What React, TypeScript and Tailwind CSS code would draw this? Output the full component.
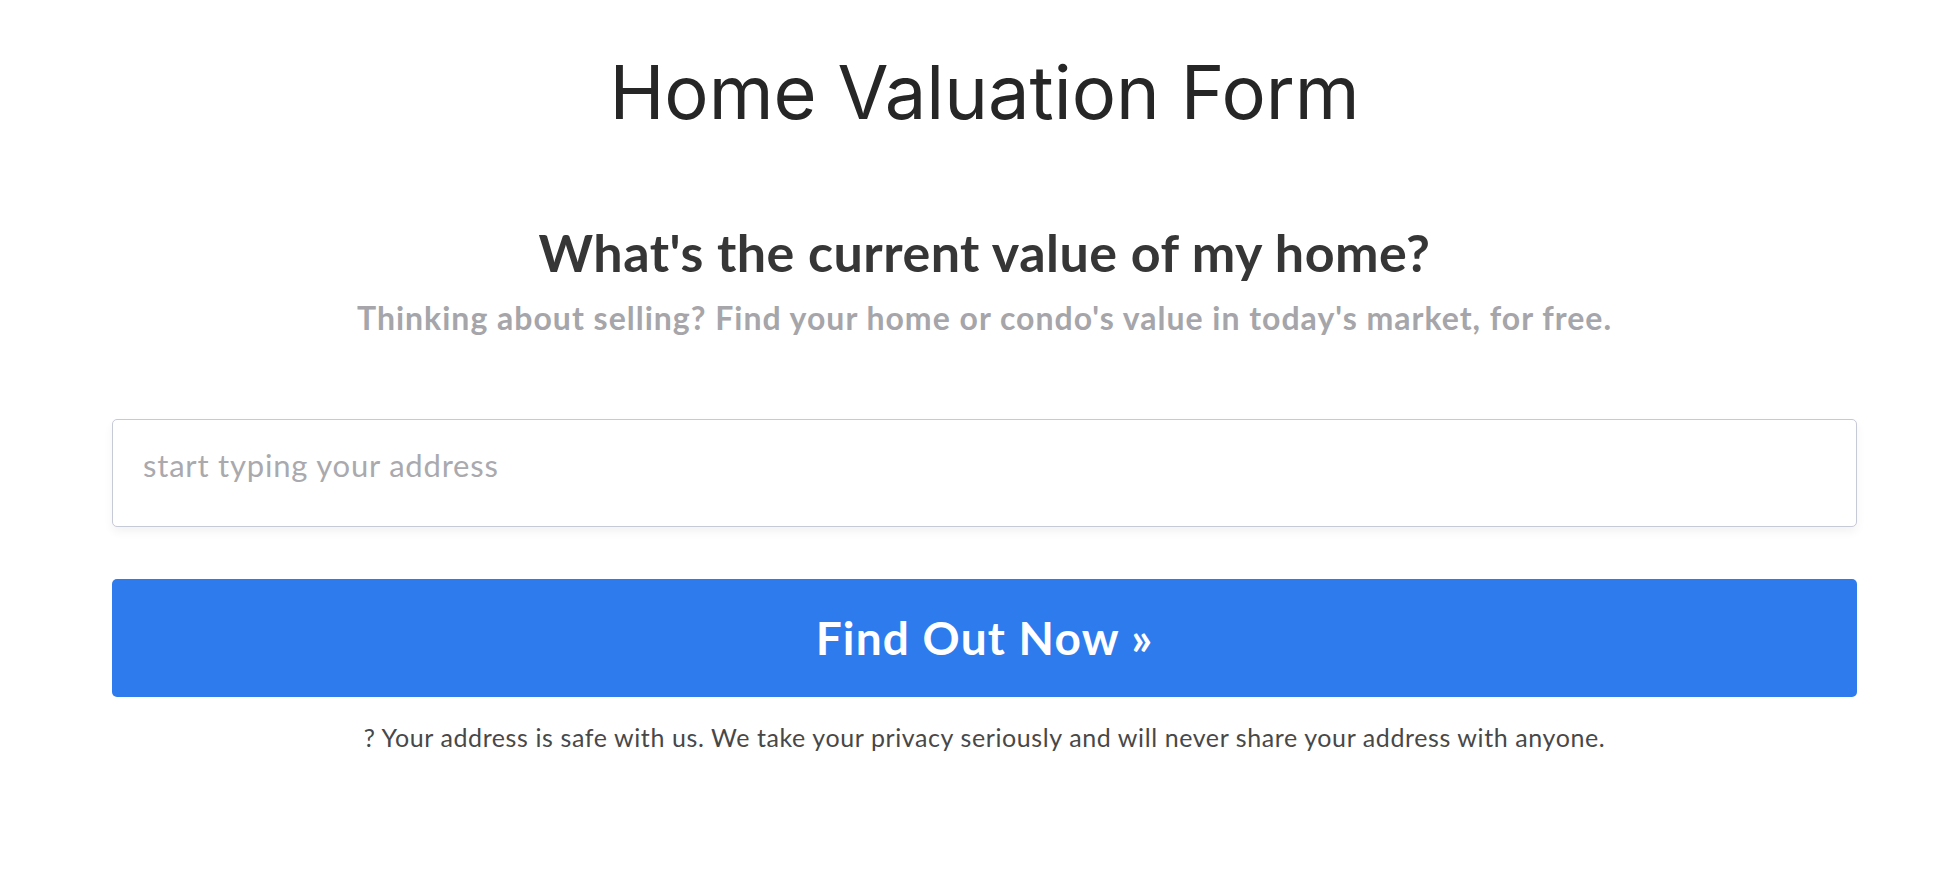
export default function App() {
  return (
    <main className="min-h-screen bg-white pl-[112px] pr-[81px] font-['Lato',sans-serif]">
      <h1 className="pt-[55px] text-center font-['Inter',sans-serif] text-[74px] font-normal leading-none text-[#262626]">
        Home Valuation Form
      </h1>

      <section className="mt-[97px] text-center">
        <h2 className="text-[52px] font-bold leading-none tracking-[0.5px] text-[#363636]">
          What's the current value of my home?
        </h2>
        <p className="mt-[24px] text-[32px] font-bold leading-none tracking-[1px] text-[#a5a5aa]">
          Thinking about selling? Find your home or condo's value in today's market, for free.
        </p>
      </section>

      <form className="mt-[85px]" onSubmit={(e) => e.preventDefault()}>
        <input
          type="text"
          placeholder="start typing your address"
          className="block h-[108px] w-full rounded-[5px] border border-[#c6cad7] bg-white pl-[30px] pb-[16px] text-[31px] tracking-[0.8px] text-[#333] shadow-[0_5px_10px_rgba(0,0,0,0.05)] outline-none placeholder:text-[#a9a9ae]"
        />

        <button
          type="submit"
          className="mt-[52px] flex h-[118px] w-full items-center justify-center rounded-[5px] bg-[#2d7bed] text-[46px] font-bold leading-none tracking-[1.2px] text-white"
        >
          Find Out Now »
        </button>
      </form>

      <p className="mt-[28px] text-center text-[25px] leading-none tracking-[0.6px] text-[#484848]">
        ? Your address is safe with us. We take your privacy seriously and will never share your address with anyone.
      </p>
    </main>
  );
}
